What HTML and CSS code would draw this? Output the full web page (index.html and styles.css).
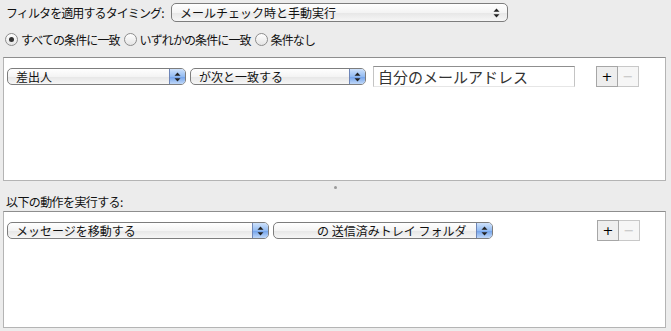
FILE: index.html
```html
<!DOCTYPE html>
<html lang="ja">
<head>
    <meta charset="UTF-8">
    <title>フィルタ</title>
    <link rel="stylesheet" href="styles.css">
</head>
<body>
    <div class="timing">
        <span class="label">フィルタを適用するタイミング:</span>
        <div class="popup plain timing-popup">
            <span class="popup-text">メールチェック時と手動実行</span>
            <span class="stepper"><svg width="7" height="10" viewBox="0 0 7 10"><path d="M3.5 0.5 L6.5 3.8 L0.5 3.8 Z M3.5 9.5 L6.5 6.2 L0.5 6.2 Z" fill="#222"/></svg></span>
        </div>
    </div>

    <div class="radios">
        <label class="radio"><span class="dot checked"></span>すべての条件に一致</label>
        <label class="radio"><span class="dot"></span>いずれかの条件に一致</label>
        <label class="radio"><span class="dot"></span>条件なし</label>
    </div>

    <div class="box conditions">
        <div class="row">
            <div class="popup w-sender">
                <span class="popup-text">差出人</span>
                <span class="stepper"><svg width="7" height="10" viewBox="0 0 7 10"><path d="M3.5 0.5 L6.5 3.8 L0.5 3.8 Z M3.5 9.5 L6.5 6.2 L0.5 6.2 Z" fill="#222"/></svg></span>
            </div>
            <div class="popup w-match">
                <span class="popup-text">が次と一致する</span>
                <span class="stepper"><svg width="7" height="10" viewBox="0 0 7 10"><path d="M3.5 0.5 L6.5 3.8 L0.5 3.8 Z M3.5 9.5 L6.5 6.2 L0.5 6.2 Z" fill="#222"/></svg></span>
            </div>
            <div class="field">自分のメールアドレス</div>
            <div class="pm">
                <span class="pm-btn">+</span><span class="pm-btn off">−</span>
            </div>
        </div>
    </div>

    <div class="splitter"><span></span></div>

    <div class="section-label">以下の動作を実行する:</div>

    <div class="box actions">
        <div class="row">
            <div class="popup w-action">
                <span class="popup-text">メッセージを移動する</span>
                <span class="stepper"><svg width="7" height="10" viewBox="0 0 7 10"><path d="M3.5 0.5 L6.5 3.8 L0.5 3.8 Z M3.5 9.5 L6.5 6.2 L0.5 6.2 Z" fill="#222"/></svg></span>
            </div>
            <div class="popup w-folder">
                <span class="popup-text folder">の 送信済みトレイ フォルダ</span>
                <span class="stepper"><svg width="7" height="10" viewBox="0 0 7 10"><path d="M3.5 0.5 L6.5 3.8 L0.5 3.8 Z M3.5 9.5 L6.5 6.2 L0.5 6.2 Z" fill="#222"/></svg></span>
            </div>
            <div class="pm push">
                <span class="pm-btn">+</span><span class="pm-btn off">−</span>
            </div>
        </div>
    </div>
</body>
</html>
```

FILE: styles.css
```css
body {
    margin: 0;
    width: 671px;
    height: 331px;
    background-color: #ececec;
    color: #111;
    font-family: "Noto Sans CJK JP", "Noto Sans", sans-serif;
    font-size: 12px;
    overflow: hidden;
}
.timing {
    display: flex;
    align-items: center;
    height: 19px;
    padding: 3px 0 0 6px;
}
.label {
    flex-shrink: 0;
    width: 165px;
    white-space: nowrap;
    letter-spacing: -0.9px;
}
.timing-popup {
    width: 337px;
}
.radios {
    display: flex;
    align-items: center;
    gap: 4px;
    height: 18px;
    margin-top: 8px;
    padding-left: 5px;
}
.radio {
    display: flex;
    align-items: center;
    gap: 3px;
    letter-spacing: -0.9px;
}
.dot {
    width: 11px;
    height: 11px;
    border: 1px solid #8c8c8c;
    border-radius: 50%;
    background: linear-gradient(#ffffff, #e4e4e4);
    position: relative;
}
.dot.checked::after {
    content: "";
    position: absolute;
    left: 3px;
    top: 3px;
    width: 5px;
    height: 5px;
    border-radius: 50%;
    background: #333;
}
.box {
    margin: 0 5px 0 3px;
    background: #fff;
    border: 1px solid #b4b4b4;
    border-top-color: #8e8e8e;
}
.conditions {
    margin-top: 9px;
    height: 122px;
}
.actions {
    height: 115px;
}
.row {
    display: flex;
    align-items: center;
    padding: 8px 0 0 3px;
}
.popup {
    display: flex;
    align-items: center;
    height: 17px;
    border: 1px solid #7d7d7d;
    border-radius: 5px;
    background: linear-gradient(#ffffff 0%, #f4f4f4 50%, #e6e6e6 51%, #f6f6f6 100%);
    box-sizing: border-box;
    overflow: hidden;
}
.timing-popup {
    height: 19px;
}
.popup-text {
    flex: 1;
    padding-left: 8px;
    white-space: nowrap;
}
.popup-text.folder {
    padding-left: 43px;
}
.stepper {
    width: 15px;
    height: 100%;
    display: flex;
    align-items: center;
    justify-content: center;
    border-left: 1px solid #6e86b8;
    background: linear-gradient(#cfe2fb 0%, #94bcf2 50%, #6fa0ea 51%, #c0d8f8 100%);
}
.plain .stepper {
    border-left: none;
    background: none;
    margin-right: 3px;
}
.w-sender {
    width: 179px;
}
.w-match {
    width: 176px;
    margin-left: 4px;
}
.w-action {
    width: 262px;
}
.w-folder {
    width: 220px;
    margin-left: 4px;
}
.field {
    width: 202px;
    height: 21px;
    margin-left: 7px;
    padding-left: 4px;
    box-sizing: border-box;
    border: 1px solid #c4c4c4;
    border-top-color: #8f8f8f;
    border-bottom-color: #e6e6e6;
    font-size: 15px;
    line-height: 19px;
    color: #333;
}
.pm {
    display: flex;
    margin-left: 21px;
}
.pm.push {
    margin-left: auto;
    margin-right: 25px;
}
.pm-btn {
    width: 20px;
    height: 19px;
    display: flex;
    align-items: center;
    justify-content: center;
    border: 1px solid #a6a6a6;
    background: #eeeeee;
    font-family: "DejaVu Sans", sans-serif;
    font-size: 13px;
    color: #000;
}
.pm-btn.off {
    border-left: none;
    border-color: #c8c8c8;
    background: #f6f6f6;
    color: #c4c4c4;
}
.splitter {
    height: 12px;
    display: flex;
    align-items: center;
    justify-content: center;
}
.splitter span {
    width: 3px;
    height: 3px;
    border-radius: 50%;
    background: #9a9a9a;
}
.section-label {
    height: 18px;
    padding-left: 6px;
    letter-spacing: -0.6px;
}
```
